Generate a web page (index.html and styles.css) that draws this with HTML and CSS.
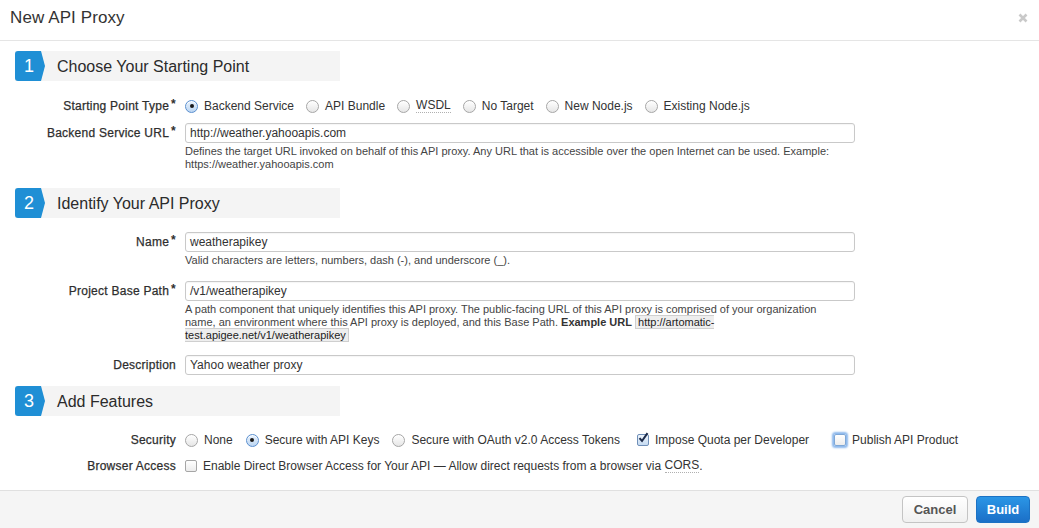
FILE: index.html
```html
<!DOCTYPE html>
<html>
<head>
<meta charset="utf-8">
<title>New API Proxy</title>
<link rel="stylesheet" href="styles.css">
</head>
<body>
<div class="modal">
  <div class="modal-header">
    <h1 class="title">New API Proxy</h1>
    <span class="close" aria-label="Close">
      <svg width="10" height="10" viewBox="0 0 10 10"><path d="M1.5 1.5 L8.5 8.5 M8.5 1.5 L1.5 8.5" stroke="#c9c9c9" stroke-width="2.6" stroke-linecap="butt"/></svg>
    </span>
  </div>

  <div class="modal-body">
    <div class="section-head s1">
      <span class="badge">1</span>
      <span class="section-title">Choose Your Starting Point</span>
    </div>

    <div class="row r-type">
      <div class="label">Starting Point Type<span class="req">*</span></div>
      <div class="options opts-type">
        <span class="opt"><span class="radio checked"></span>Backend Service</span>
        <span class="opt"><span class="radio"></span>API Bundle</span>
        <span class="opt"><span class="radio"></span><span class="dotted">WSDL</span></span>
        <span class="opt"><span class="radio"></span>No Target</span>
        <span class="opt"><span class="radio"></span>New Node.js</span>
        <span class="opt"><span class="radio"></span>Existing Node.js</span>
      </div>
    </div>

    <div class="row r-url">
      <div class="label">Backend Service URL<span class="req">*</span></div>
      <div class="control">
        <div class="input">http://weather.yahooapis.com</div>
        <div class="help">Defines the target URL invoked on behalf of this API proxy. Any URL that is accessible over the open Internet can be used. Example:<br>https://weather.yahooapis.com</div>
      </div>
    </div>

    <div class="section-head s2">
      <span class="badge">2</span>
      <span class="section-title">Identify Your API Proxy</span>
    </div>

    <div class="row r-name">
      <div class="label">Name<span class="req">*</span></div>
      <div class="control">
        <div class="input">weatherapikey</div>
        <div class="help">Valid characters are letters, numbers, dash (-), and underscore (_).</div>
      </div>
    </div>

    <div class="row r-path">
      <div class="label">Project Base Path<span class="req">*</span></div>
      <div class="control">
        <div class="input">/v1/weatherapikey</div>
        <div class="help">A path component that uniquely identifies this API proxy. The public-facing URL of this API proxy is comprised of your organization<br>name, an environment where this API proxy is deployed, and this Base Path. <b>Example URL</b> <span class="code">http://artomatic-<br>test.apigee.net/v1/weatherapikey</span></div>
      </div>
    </div>

    <div class="row r-desc">
      <div class="label">Description</div>
      <div class="control">
        <div class="input">Yahoo weather proxy</div>
      </div>
    </div>

    <div class="section-head s3">
      <span class="badge">3</span>
      <span class="section-title">Add Features</span>
    </div>

    <div class="row r-sec">
      <div class="label">Security</div>
      <div class="options">
        <span class="opt"><span class="radio"></span>None</span>
        <span class="opt"><span class="radio checked"></span>Secure with API Keys</span>
        <span class="opt"><span class="radio"></span>Secure with OAuth v2.0 Access Tokens</span>
        <span class="opt opt-check"><span class="checkbox checked"><svg width="12" height="12" viewBox="0 0 12 12"><path d="M2.5 6.2 L5 9 L10.5 1.2" fill="none" stroke="#1d2b4a" stroke-width="2"/></svg></span>Impose Quota per Developer</span>
        <span class="opt opt-check2"><span class="checkbox focus"></span>Publish API Product</span>
      </div>
    </div>

    <div class="row r-browser">
      <div class="label">Browser Access</div>
      <div class="options">
        <span class="opt"><span class="checkbox"></span>Enable Direct Browser Access for Your API — Allow direct requests from a browser via&nbsp;<span class="dotted">CORS</span>.</span>
      </div>
    </div>
  </div>

  <div class="modal-footer">
    <button class="btn btn-cancel">Cancel</button>
    <button class="btn btn-build">Build</button>
  </div>
</div>
</body>
</html>
```

FILE: styles.css
```css
* { box-sizing: border-box; }

html, body {
  margin: 0;
  padding: 0;
  background: #fff;
}

body {
  font-family: "Liberation Sans", Arial, Helvetica, sans-serif;
  color: #333;
  font-size: 12px;
}

.modal {
  width: 1039px;
  height: 528px;
  display: flex;
  flex-direction: column;
}

.modal-header {
  height: 41px;
  border-bottom: 1px solid #e5e5e5;
  display: flex;
  justify-content: space-between;
  align-items: flex-start;
  padding: 8px 11px 0 10px;
}

.title {
  margin: 0;
  font-size: 17px;
  font-weight: normal;
  line-height: 20px;
  color: #333;
  letter-spacing: 0.1px;
}

.close {
  display: flex;
  margin-top: 5px;
}

.modal-body {
  flex: 1;
  padding: 0 15px;
}

.section-head {
  width: 325px;
  height: 30px;
  background: #f4f4f4;
  display: flex;
  align-items: center;
}

.s1 { margin-top: 10px; }
.s2 { margin-top: 17px; }
.s3 { margin-top: 11px; }

.badge {
  position: relative;
  width: 26px;
  height: 30px;
  background: #1f8fd5;
  color: #fff;
  font-size: 18px;
  line-height: 30px;
  text-align: center;
  border-radius: 3px 0 0 3px;
  padding-left: 2px;
}

.badge::after {
  content: "";
  position: absolute;
  left: 26px;
  top: 0;
  border-left: 4px solid #1f8fd5;
  border-top: 15px solid transparent;
  border-bottom: 15px solid transparent;
}

.section-title {
  margin-left: 16px;
  font-size: 16px;
  line-height: 30px;
  padding-top: 1px;
  color: #2b2b2b;
}

.row {
  display: grid;
  grid-template-columns: 161px 670px;
  column-gap: 9px;
  align-items: start;
}

.label {
  text-align: right;
  line-height: 20px;
  font-size: 12px;
  color: #2e2e2e;
  -webkit-text-stroke: 0.25px #2e2e2e;
  letter-spacing: 0.25px;
  white-space: nowrap;
}

.req {
  display: inline-block;
  margin-left: 2px;
  font-weight: bold;
  font-size: 12px;
  position: relative;
  top: -2px;
  -webkit-text-stroke: 0;
}

.r-type { margin-top: 15px; }
.r-url { margin-top: 7px; }
.r-name { margin-top: 14px; }
.r-path { margin-top: 14px; }
.r-desc { margin-top: 13px; }
.r-sec { margin-top: 14px; }
.r-browser { margin-top: 6px; }

.options {
  display: flex;
  align-items: center;
  gap: 13px;
  height: 20px;
  white-space: nowrap;
}

.opts-type { gap: 12px; }

.opt {
  display: inline-flex;
  align-items: center;
  color: #333;
}

.opt-check { margin-left: 4px; }
.opt-check2 { margin-left: 12px; }

.radio {
  width: 13px;
  height: 13px;
  border-radius: 50%;
  border: 1px solid #a6a6a6;
  background: linear-gradient(#ffffff, #e6e6e6);
  margin-right: 6px;
  display: inline-flex;
  align-items: center;
  justify-content: center;
  box-shadow: inset 0 1px 0 #fff;
}

.radio.checked {
  border-color: #5a8fcf;
  background: linear-gradient(#e9f2fc, #bcd6f2);
}

.radio.checked::after {
  content: "";
  width: 4px;
  height: 4px;
  border-radius: 50%;
  background: #1a1a1a;
}

.checkbox {
  width: 12px;
  height: 12px;
  border: 1px solid #a6a6a6;
  border-radius: 2px;
  background: linear-gradient(#ffffff, #ececec);
  margin-right: 6px;
  position: relative;
  display: inline-block;
}

.checkbox.checked {
  border-color: #6f8fb8;
  background: linear-gradient(#eef4fb, #c6dbf2);
}

.checkbox.checked svg {
  position: absolute;
  left: -1px;
  top: -3px;
}

.checkbox.focus {
  border-color: #7ea7d6;
  box-shadow: 0 0 2px 1.5px #8cb8ec;
}

.dotted {
  border-bottom: 1px dotted #b0b0b0;
  line-height: 13px;
}

.control {
  display: flex;
  flex-direction: column;
}

.input {
  height: 20px;
  border: 1px solid #c9c9c9;
  border-radius: 3px;
  background: #fff;
  font-size: 12px;
  line-height: 18px;
  padding-left: 4px;
  color: #333;
  box-shadow: inset 0 1px 1px rgba(0, 0, 0, 0.04);
}

.help {
  margin-top: 2px;
  font-size: 11px;
  line-height: 13px;
  color: #444;
}

.help b {
  font-weight: bold;
  color: #333;
}

.code {
  background: #eeeeee;
  border: 1px solid #cfcfcf;
  padding: 0 2px;
  color: #222;
}

.modal-footer {
  height: 38px;
  border-top: 1px solid #e0e0e0;
  background: #f5f5f5;
  display: flex;
  justify-content: flex-end;
  align-items: flex-start;
  gap: 8px;
  padding: 5px 9px 0 0;
}

.btn {
  height: 27px;
  border-radius: 4px;
  font-family: "Liberation Sans", Arial, sans-serif;
  font-size: 13px;
  font-weight: bold;
  padding: 0;
  cursor: pointer;
}

.btn-cancel {
  width: 66px;
  border: 1px solid #c4c4c4;
  background: linear-gradient(#ffffff, #f0f0f0);
  color: #555;
}

.btn-build {
  width: 54px;
  border: 1px solid #1c72c4;
  background: linear-gradient(#2b96e6, #1b6fc7);
  color: #fff;
}
```
